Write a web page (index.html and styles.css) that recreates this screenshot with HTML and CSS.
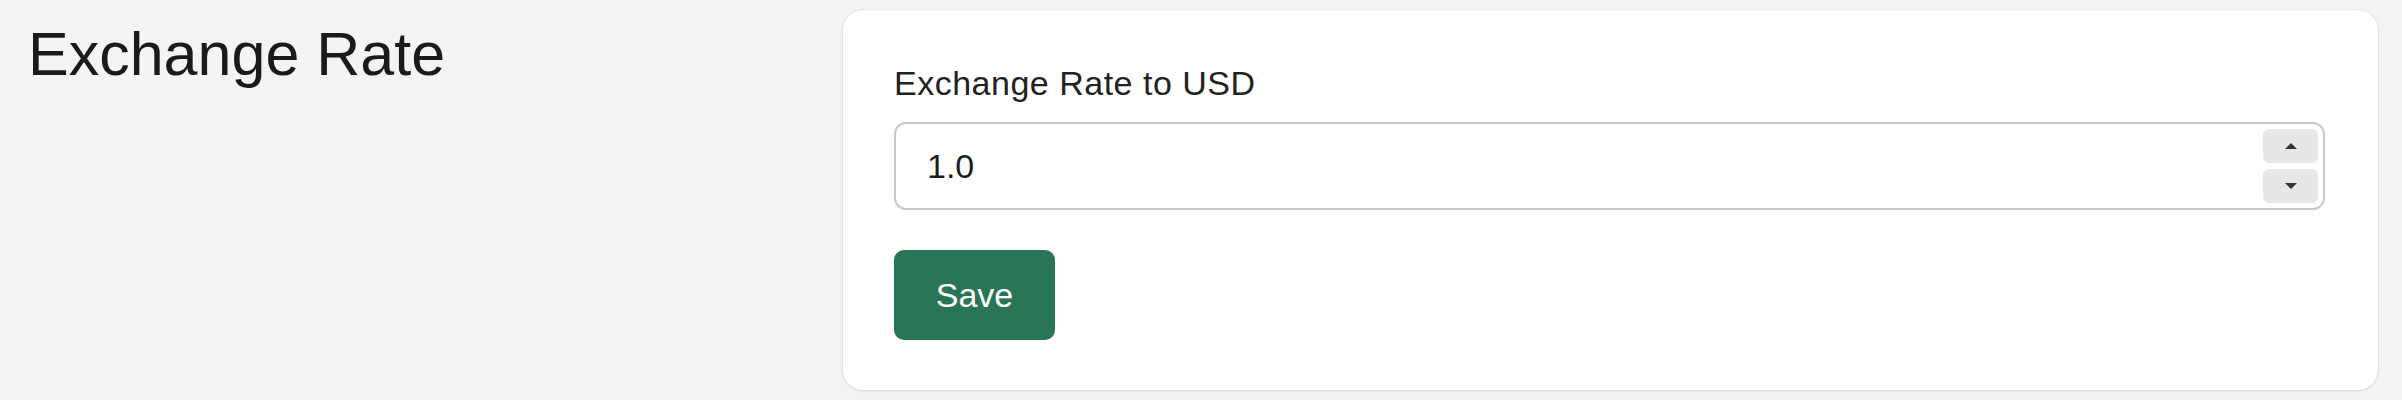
FILE: index.html
```html
<!DOCTYPE html>
<html lang="en">
<head>
<meta charset="utf-8">
<title>Exchange Rate</title>
<link rel="stylesheet" href="styles.css">
</head>
<body>
<div class="page">
  <div class="side">
    <h2 class="title">Exchange Rate</h2>
  </div>
  <form class="card">
    <label class="label" for="rate">Exchange Rate to USD</label>
    <div class="field">
      <input class="input" id="rate" type="text" value="1.0">
      <div class="spin">
        <span class="spin-btn"><svg width="14" height="8" viewBox="0 0 14 8"><path d="M7 1 L13 7 L1 7 Z" fill="#333"/></svg></span>
        <span class="spin-btn"><svg width="14" height="8" viewBox="0 0 14 8"><path d="M1 1 L13 1 L7 7 Z" fill="#333"/></svg></span>
      </div>
    </div>
    <div class="actions">
      <button class="btn" type="button">Save</button>
    </div>
  </form>
</div>
</body>
</html>
```

FILE: styles.css
```css
* { box-sizing: border-box; }
html, body { margin: 0; padding: 0; }
body {
  background: #f4f4f6;
  font-family: "Liberation Sans", Arial, sans-serif;
  color: #1c1c1e;
  width: 2402px;
  height: 400px;
  overflow: hidden;
}
.page {
  display: grid;
  grid-template-columns: 815px 1fr;
  column-gap: 0;
  padding: 10px 24px 10px 28px;
}
.side { padding-top: 8px; }
.title {
  margin: 0;
  font-weight: 400;
  font-size: 61px;
  line-height: 1.2;
  color: #1a1a1a;
}
.card {
  background: #ffffff;
  border-radius: 20px;
  box-shadow: 0 1px 3px rgba(0,0,0,0.10), 0 0 0 1px rgba(0,0,0,0.04);
  padding: 48px 53px 50px 51px;
  display: flex;
  flex-direction: column;
  height: 380px;
}
.label {
  font-size: 34px;
  line-height: 51px;
  letter-spacing: 0.5px;
  color: #222;
}
.field {
  margin-top: 13px;
  height: 88px;
  border: 2px solid #c9c9cd;
  border-radius: 12px;
  display: flex;
  align-items: center;
  padding: 0 5px 0 31px;
  background: #fff;
}
.input {
  flex: 1;
  border: none;
  outline: none;
  background: transparent;
  font-family: "Liberation Sans", Arial, sans-serif;
  font-size: 34px;
  color: #1c1c1e;
  padding: 0;
  height: 60px;
}
.spin {
  display: flex;
  flex-direction: column;
  gap: 6px;
  width: 55px;
}
.spin-btn {
  height: 34px;
  background: #e7e7e9;
  border-radius: 6px;
  display: flex;
  align-items: center;
  justify-content: center;
}
.actions { margin-top: 40px; }
.btn {
  width: 161px;
  height: 90px;
  background: #2a7556;
  color: #fff;
  border: none;
  border-radius: 10px;
  font-family: "Liberation Sans", Arial, sans-serif;
  font-size: 34px;
  padding: 0;
}
```
